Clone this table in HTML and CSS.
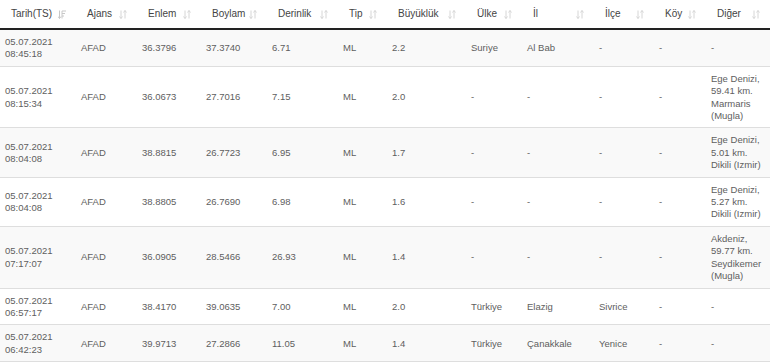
FILE: index.html
```html
<!DOCTYPE html>
<html lang="tr">
<head>
  <meta charset="UTF-8">
  <title>Son Depremler</title>
  <link rel="stylesheet" href="styles.css">
</head>
<body>

  <table class="quakes">
    <colgroup>
      <col class="c-date"><col class="c-agency"><col class="c-lat"><col class="c-lon">
      <col class="c-depth"><col class="c-type"><col class="c-mag"><col class="c-country">
      <col class="c-city"><col class="c-town"><col class="c-village"><col class="c-other">
    </colgroup>
    <thead>
      <tr>
        <th><div class="head"><span>Tarih(TS)</span>
          <svg class="sort" width="8" height="9" viewBox="0 0 8 9"><path d="M1.5 0.5v8M0 6.5l1.5 2l1.5-2M4 1h4M4 3.5h3M4 6h2M4 1v7.5" stroke="#c8c8c8" stroke-width="1" fill="none"/></svg></div></th>
        <th><div class="head"><span>Ajans</span>
          <svg class="sort" width="8" height="9" viewBox="0 0 8 9"><path d="M2 0.5v8M0.5 6.5l1.5 2l1.5-2M6 8.5v-8M4.5 2.5l1.5-2l1.5 2" stroke="#d6d6d6" stroke-width="1" fill="none"/></svg></div></th>
        <th><div class="head"><span>Enlem</span>
          <svg class="sort" width="8" height="9" viewBox="0 0 8 9"><path d="M2 0.5v8M0.5 6.5l1.5 2l1.5-2M6 8.5v-8M4.5 2.5l1.5-2l1.5 2" stroke="#d6d6d6" stroke-width="1" fill="none"/></svg></div></th>
        <th><div class="head"><span>Boylam</span>
          <svg class="sort" width="8" height="9" viewBox="0 0 8 9"><path d="M2 0.5v8M0.5 6.5l1.5 2l1.5-2M6 8.5v-8M4.5 2.5l1.5-2l1.5 2" stroke="#d6d6d6" stroke-width="1" fill="none"/></svg></div></th>
        <th><div class="head"><span>Derinlik</span>
          <svg class="sort" width="8" height="9" viewBox="0 0 8 9"><path d="M2 0.5v8M0.5 6.5l1.5 2l1.5-2M6 8.5v-8M4.5 2.5l1.5-2l1.5 2" stroke="#d6d6d6" stroke-width="1" fill="none"/></svg></div></th>
        <th><div class="head"><span>Tip</span>
          <svg class="sort" width="8" height="9" viewBox="0 0 8 9"><path d="M2 0.5v8M0.5 6.5l1.5 2l1.5-2M6 8.5v-8M4.5 2.5l1.5-2l1.5 2" stroke="#d6d6d6" stroke-width="1" fill="none"/></svg></div></th>
        <th><div class="head"><span>Büyüklük</span>
          <svg class="sort" width="8" height="9" viewBox="0 0 8 9"><path d="M2 0.5v8M0.5 6.5l1.5 2l1.5-2M6 8.5v-8M4.5 2.5l1.5-2l1.5 2" stroke="#d6d6d6" stroke-width="1" fill="none"/></svg></div></th>
        <th><div class="head"><span>Ülke</span>
          <svg class="sort" width="8" height="9" viewBox="0 0 8 9"><path d="M2 0.5v8M0.5 6.5l1.5 2l1.5-2M6 8.5v-8M4.5 2.5l1.5-2l1.5 2" stroke="#d6d6d6" stroke-width="1" fill="none"/></svg></div></th>
        <th><div class="head"><span>İl</span>
          <svg class="sort" width="8" height="9" viewBox="0 0 8 9"><path d="M2 0.5v8M0.5 6.5l1.5 2l1.5-2M6 8.5v-8M4.5 2.5l1.5-2l1.5 2" stroke="#d6d6d6" stroke-width="1" fill="none"/></svg></div></th>
        <th><div class="head"><span>İlçe</span>
          <svg class="sort" width="8" height="9" viewBox="0 0 8 9"><path d="M2 0.5v8M0.5 6.5l1.5 2l1.5-2M6 8.5v-8M4.5 2.5l1.5-2l1.5 2" stroke="#d6d6d6" stroke-width="1" fill="none"/></svg></div></th>
        <th><div class="head"><span>Köy</span>
          <svg class="sort" width="8" height="9" viewBox="0 0 8 9"><path d="M2 0.5v8M0.5 6.5l1.5 2l1.5-2M6 8.5v-8M4.5 2.5l1.5-2l1.5 2" stroke="#d6d6d6" stroke-width="1" fill="none"/></svg></div></th>
        <th><div class="head"><span>Diğer</span>
          <svg class="sort" width="8" height="9" viewBox="0 0 8 9"><path d="M2 0.5v8M0.5 6.5l1.5 2l1.5-2M6 8.5v-8M4.5 2.5l1.5-2l1.5 2" stroke="#d6d6d6" stroke-width="1" fill="none"/></svg></div></th>
      </tr>
    </thead>
    <tbody>
      <tr>
        <td>05.07.2021<br>08:45:18</td><td>AFAD</td><td>36.3796</td><td>37.3740</td><td>6.71</td><td>ML</td>
        <td>2.2</td><td>Suriye</td><td>Al Bab</td><td>-</td><td>-</td><td>-</td>
      </tr>
      <tr>
        <td>05.07.2021<br>08:15:34</td><td>AFAD</td><td>36.0673</td><td>27.7016</td><td>7.15</td><td>ML</td>
        <td>2.0</td><td>-</td><td>-</td><td>-</td><td>-</td><td>Ege Denizi, 59.41 km. Marmaris (Mugla)</td>
      </tr>
      <tr>
        <td>05.07.2021<br>08:04:08</td><td>AFAD</td><td>38.8815</td><td>26.7723</td><td>6.95</td><td>ML</td>
        <td>1.7</td><td>-</td><td>-</td><td>-</td><td>-</td><td>Ege Denizi, 5.01 km. Dikili (Izmir)</td>
      </tr>
      <tr>
        <td>05.07.2021<br>08:04:08</td><td>AFAD</td><td>38.8805</td><td>26.7690</td><td>6.98</td><td>ML</td>
        <td>1.6</td><td>-</td><td>-</td><td>-</td><td>-</td><td>Ege Denizi, 5.27 km. Dikili (Izmir)</td>
      </tr>
      <tr>
        <td>05.07.2021<br>07:17:07</td><td>AFAD</td><td>36.0905</td><td>28.5466</td><td>26.93</td><td>ML</td>
        <td>1.4</td><td>-</td><td>-</td><td>-</td><td>-</td><td>Akdeniz, 59.77 km. Seydikemer (Mugla)</td>
      </tr>
      <tr>
        <td>05.07.2021<br>06:57:17</td><td>AFAD</td><td>38.4170</td><td>39.0635</td><td>7.00</td><td>ML</td>
        <td>2.0</td><td>Türkiye</td><td>Elazig</td><td>Sivrice</td><td>-</td><td>-</td>
      </tr>
      <tr>
        <td>05.07.2021<br>06:42:23</td><td>AFAD</td><td>39.9713</td><td>27.2866</td><td>11.05</td><td>ML</td>
        <td>1.4</td><td>Türkiye</td><td>Çanakkale</td><td>Yenice</td><td>-</td><td>-</td>
      </tr>
    </tbody>
  </table>

</body>
</html>
```

FILE: styles.css
```css
body {
  font-family: "Liberation Sans", Arial, sans-serif;
  background-color: #fff;
  margin: 0;
}

.quakes {
  width: 770px;
  table-layout: fixed;
  border-collapse: collapse;
}

.c-date { width: 76px; }
.c-agency { width: 61px; }
.c-lat { width: 64px; }
.c-lon { width: 66px; }
.c-depth { width: 71px; }
.c-type { width: 49px; }
.c-mag { width: 79px; }
.c-country { width: 56px; }
.c-city { width: 72px; }
.c-town { width: 60px; }
.c-village { width: 52px; }
.c-other { width: 64px; }

th {
  padding: 8px 10px 8px 11px;
  font-size: 10px;
  font-weight: normal;
  line-height: 12px;
  color: #444;
  text-align: left;
  border-bottom: 2px solid #222;
}

.head {
  display: flex;
  justify-content: space-between;
  align-items: center;
}

.sort {
  flex: none;
}

td {
  padding: 6px 5px 5px 5px;
  font-size: 9.5px;
  line-height: 12.4px;
  color: #5e5e5e;
  vertical-align: middle;
  border-bottom: 1px solid #dedede;
}

tbody tr:nth-child(odd) {
  background-color: #f9f9f9;
}
```
